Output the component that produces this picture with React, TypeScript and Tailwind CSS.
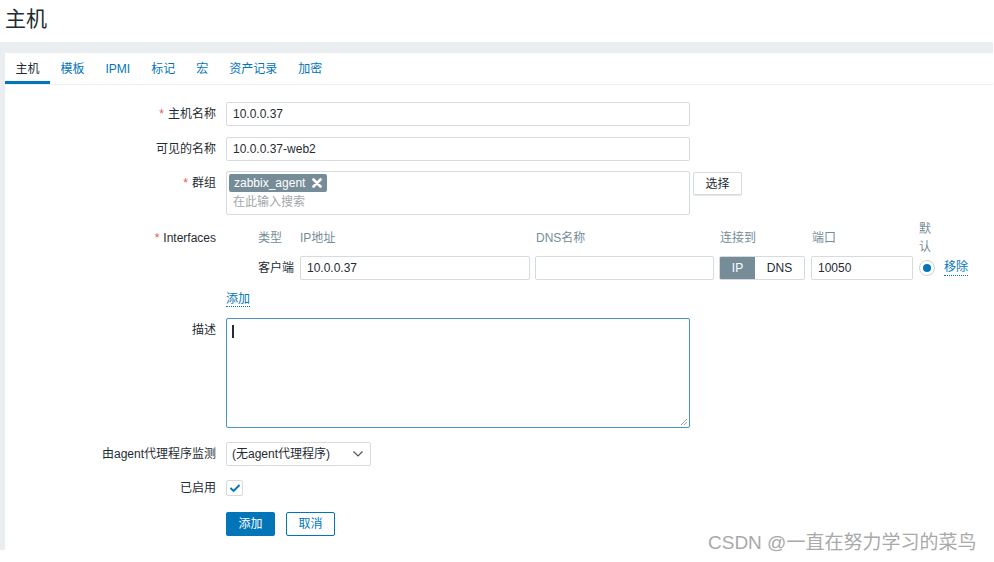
import React from "react";

const tabs = ["主机", "模板", "IPMI", "标记", "宏", "资产记录", "加密"];

const Label = ({ text, required, className = "" }: { text: string; required?: boolean; className?: string }) => (
  <div className={`w-[211px] shrink-0 text-right pr-0 ${className}`}>
    {required && <span className="text-[#e45959] mr-[4px]">*</span>}
    {text}
  </div>
);

const TextInput = ({ value, className = "" }: { value: string; className?: string }) => (
  <div className={`h-[24px] border border-[#d5dbde] rounded-[2px] bg-white px-[6px] leading-[22px] text-[#1f2c33] ${className}`}>
    {value}
  </div>
);

export default function App() {
  return (
    <div className="relative w-[994px] h-[562px] bg-white overflow-hidden font-['Liberation_Sans','Noto_Sans_CJK_SC',sans-serif] text-[12px] text-[#1f2c33]">
      {/* page title */}
      <div className="h-[42px] pl-[5px] pt-[6px] text-[21px] leading-[26px]">主机</div>

      <div className="w-[993px] h-[508px] bg-[#ebeef0] pt-[11px] pl-[5px]">
        <div className="h-full bg-white">
          {/* tabs */}
          <div className="flex border-b border-[#ebeef0]">
            {tabs.map((t, i) => (
              <div
                key={t}
                className={`px-[10.5px] pt-[9px] pb-[4px] leading-[15px] border-b-[3px] ${
                  i === 0 ? "border-[#0275b8] text-[#1f2c33]" : "border-transparent text-[#0275b8]"
                }`}
              >
                {t}
              </div>
            ))}
          </div>

          <div className="pt-[17px]">
            {/* host name */}
            <div className="flex">
              <Label text="主机名称" required className="leading-[24px]" />
              <TextInput value="10.0.0.37" className="ml-[10px] w-[464px]" />
            </div>

            <div className="flex mt-[11px]">
              <Label text="可见的名称" className="leading-[24px]" />
              <TextInput value="10.0.0.37-web2" className="ml-[10px] w-[464px]" />
            </div>

            {/* groups */}
            <div className="flex mt-[10px] items-start">
              <Label text="群组" required className="leading-[24px]" />
              <div className="ml-[10px] w-[464px] h-[44px] border border-[#d5dbde] rounded-[2px] p-[2px]">
                <div className="inline-flex items-center h-[18px] pl-[5px] pr-[5px] bg-[#768d99] text-white rounded-[2px]">
                  <span>zabbix_agent</span>
                  <svg width="10" height="10" viewBox="0 0 10 10" className="ml-[7px]">
                    <path d="M1.5 1.5 L8.5 8.5 M8.5 1.5 L1.5 8.5" stroke="white" strokeWidth="2.6" strokeLinecap="round" />
                  </svg>
                </div>
                <div className="mt-[3px] pl-[4px] leading-[14px] text-[#a3a8ab]">在此输入搜索</div>
              </div>
              <button className="ml-[3px] mt-[1px] w-[49px] h-[23px] border border-[#d5dbde] rounded-[2px] bg-white text-[#1f2c33] shadow-[0_1px_0_#e4e8ea]">
                选择
              </button>
            </div>

            {/* interfaces */}
            <div className="flex mt-[5px] items-start">
              <Label text="Interfaces" required className="leading-[36px]" />
              <div className="ml-[10px] pl-[32px]">
                <div className="flex items-center h-[36px] text-[#768d99]">
                  <div className="w-[42px]">类型</div>
                  <div className="w-[230px]">IP地址</div>
                  <div className="w-[179px] ml-[5px] pl-[1px]">DNS名称</div>
                  <div className="w-[86px] ml-[5px] pl-[1px]">连接到</div>
                  <div className="w-[102px] ml-[6px] pl-[1px]">端口</div>
                  <div className="w-[14px] ml-[6px] leading-[18px] break-all">默认</div>
                </div>
                <div className="flex items-center h-[24px]">
                  <div className="w-[42px]">客户端</div>
                  <TextInput value="10.0.0.37" className="w-[230px]" />
                  <TextInput value="" className="w-[179px] ml-[5px]" />
                  <div className="flex w-[86px] h-[24px] ml-[5px] border border-[#d5dbde] rounded-[2px] overflow-hidden">
                    <div className="w-[35px] bg-[#768d99] text-white flex items-center justify-center">IP</div>
                    <div className="flex-1 flex items-center justify-center">DNS</div>
                  </div>
                  <TextInput value="10050" className="w-[102px] ml-[6px]" />
                  <div className="ml-[6px] w-[16px] h-[16px] rounded-full border border-[#c9d0d4] bg-white flex items-center justify-center">
                    <div className="w-[8px] h-[8px] rounded-full bg-[#0275b8]" />
                  </div>
                  <span className="ml-[9px] text-[#0275b8] leading-[15px] border-b border-dotted border-[#0275b8]">移除</span>
                </div>
              </div>
            </div>

            <div className="flex mt-[10px] h-[18px]">
              <Label text="" />
              <div className="ml-[10px]">
                <span className="text-[#0275b8] leading-[15px] border-b border-dotted border-[#0275b8]">添加</span>
              </div>
            </div>

            {/* description */}
            <div className="flex mt-[10px] items-start">
              <Label text="描述" className="leading-[24px]" />
              <div className="relative ml-[10px] w-[464px] h-[110px] border border-[#4796c4] rounded-[2px] px-[5px] pt-[6px]">
                <span className="block w-[2px] h-[13px] bg-[#2b2b2b]" />
                <svg width="8" height="8" viewBox="0 0 8 8" className="absolute right-[1px] bottom-[1px]">
                  <path d="M7 1 L1 7 M7 4 L4 7" stroke="#9aa0a4" strokeWidth="1" />
                </svg>
              </div>
            </div>

            {/* proxy */}
            <div className="flex mt-[14px]">
              <Label text="由agent代理程序监测" className="leading-[24px]" />
              <div className="ml-[10px] w-[145px] h-[24px] border border-[#d5dbde] rounded-[2px] pl-[5px] pr-[6px] flex items-center justify-between">
                <span>(无agent代理程序)</span>
                <svg width="12" height="8" viewBox="0 0 12 8">
                  <path d="M1.5 1.5 L6 6 L10.5 1.5" fill="none" stroke="#4a565c" strokeWidth="1.2" />
                </svg>
              </div>
            </div>

            {/* enabled */}
            <div className="flex mt-[14px] items-center">
              <Label text="已启用" className="leading-[16px]" />
              <div className="ml-[10px] w-[17px] h-[16px] border border-[#d5dbde] rounded-[2px] bg-white flex items-center justify-center">
                <svg width="12" height="10" viewBox="0 0 12 10">
                  <path d="M1.5 5 L4.6 8 L10.5 2" fill="none" stroke="#0275b8" strokeWidth="1.9" />
                </svg>
              </div>
            </div>

            {/* buttons */}
            <div className="flex mt-[16px]">
              <Label text="" />
              <button className="ml-[10px] w-[49px] h-[24px] rounded-[2px] bg-[#0275b8] text-white">添加</button>
              <button className="ml-[11px] w-[49px] h-[24px] rounded-[2px] border border-[#0275b8] bg-white text-[#0275b8]">取消</button>
            </div>
          </div>
        </div>
      </div>

      {/* watermark */}
      <div className="absolute left-[708px] top-[532px] text-[19px] leading-[22px] text-[#a9a9a9]">
        CSDN @一直在努力学习的菜鸟
      </div>
    </div>
  );
}
